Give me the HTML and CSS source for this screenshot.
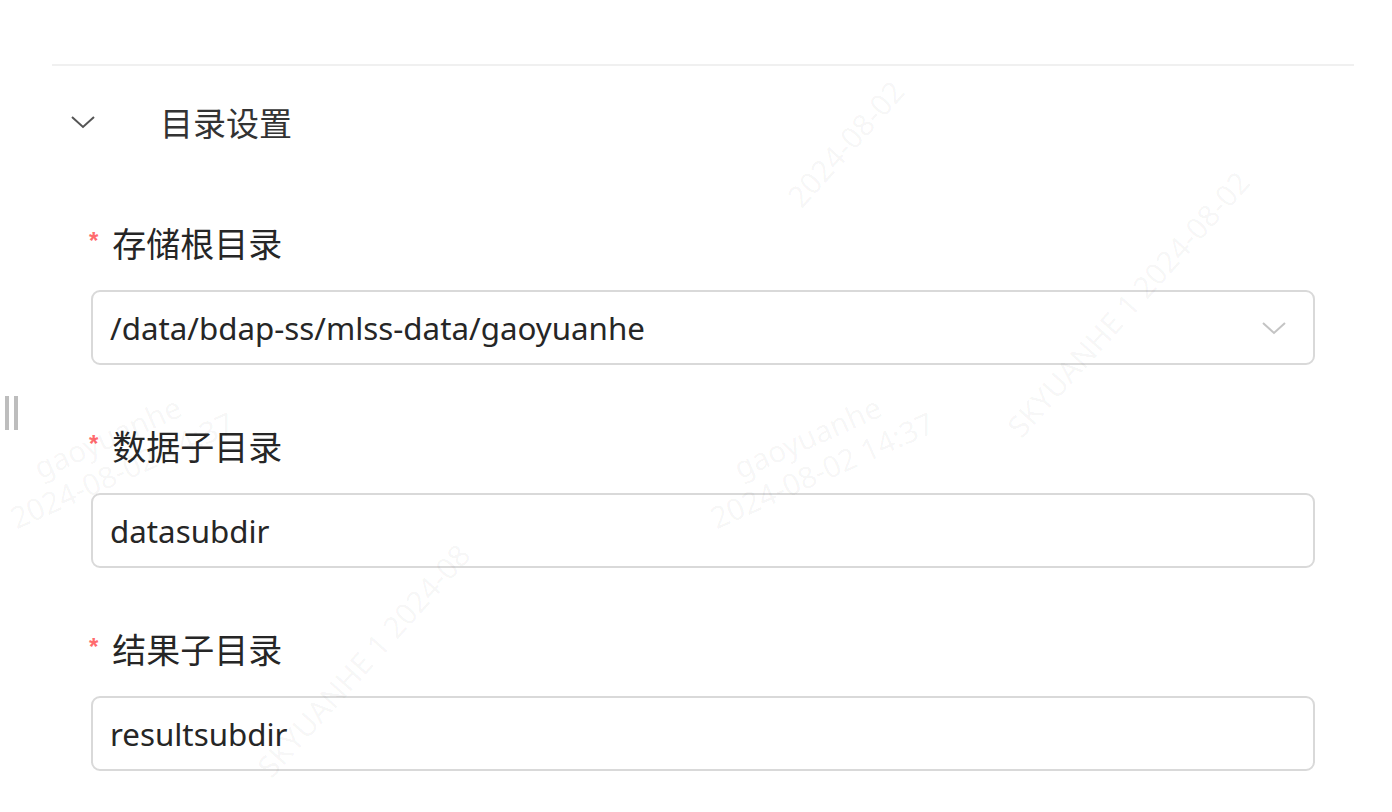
FILE: index.html
```html
<!DOCTYPE html>
<html lang="zh-CN">
<head>
<meta charset="utf-8">
<link rel="stylesheet" href="styles.css">
</head>
<body>
<div class="page">
  <div class="divider"></div>
  <div class="section-head">
    <svg class="collapse-icon" width="26" height="16" viewBox="0 0 26 16"><path d="M2 3 L13 13 L24 3" fill="none" stroke="#555" stroke-width="2"/></svg>
    <span class="section-title">目录设置</span>
  </div>
  <div class="form">
    <div class="form-item">
      <label class="label"><span class="req">*</span>存储根目录</label>
      <div class="field select">
        <span class="value">/data/bdap-ss/mlss-data/gaoyuanhe</span>
        <svg class="arrow" width="26" height="16" viewBox="0 0 26 16"><path d="M2 3 L13 13 L24 3" fill="none" stroke="#c4c4c4" stroke-width="2"/></svg>
      </div>
    </div>
    <div class="form-item">
      <label class="label"><span class="req">*</span>数据子目录</label>
      <div class="field"><span class="value">datasubdir</span></div>
    </div>
    <div class="form-item">
      <label class="label"><span class="req">*</span>结果子目录</label>
      <div class="field"><span class="value">resultsubdir</span></div>
    </div>
  </div>
  <div class="handle"><span></span><span></span></div>
  <div class="wm wm1">gaoyuanhe<br>2024-08-02 14:37</div>
  <div class="wm wm2">gaoyuanhe<br>2024-08-02 14:37</div>
  <div class="wm wm3">SKYUANHE 1 2024-08-02</div>
  <div class="wm wm4">SKYUANHE 1 2024-08</div>
  <div class="wm wm5">2024-08-02</div>
</div>
</body>
</html>
```

FILE: styles.css
```css
html, body {
  margin: 0;
  padding: 0;
  background: #fff;
}
body {
  font-family: "Noto Sans", "Noto Sans CJK SC", sans-serif;
  color: #262626;
}
.page {
  position: relative;
  width: 1392px;
  height: 812px;
  overflow: hidden;
  padding: 64px 38px 0 52px;
  box-sizing: border-box;
}
.divider {
  height: 2px;
  background: #f0f0f0;
}
.section-head {
  display: flex;
  align-items: center;
  height: 112px;
  padding-left: 18px;
  box-sizing: border-box;
}
.collapse-icon {
  margin-right: 64px;
}
.section-title {
  font-family: "Noto Sans CJK SC", sans-serif;
  font-size: 33px;
  color: #333;
}
.form {
  padding: 0 39px;
  display: flex;
  flex-direction: column;
  gap: 58px;
  margin-top: 42px;
}
.form-item {
  display: flex;
  flex-direction: column;
}
.label {
  font-family: "Noto Sans CJK SC", sans-serif;
  font-size: 34px;
  line-height: 46px;
  color: #262626;
  display: flex;
  align-items: flex-start;
  margin-bottom: 24px;
}
.req {
  color: #ff6b6e;
  font-size: 24px;
  line-height: 24px;
  margin: 9px 14px 0 -2px;
  font-family: "Liberation Sans", sans-serif;
  font-weight: bold;
}
.field {
  height: 75px;
  border: 2px solid #d9d9d9;
  border-radius: 9px;
  box-sizing: border-box;
  display: flex;
  align-items: center;
  padding: 0 26px 0 17px;
}
.value {
  flex: 1;
  font-family: "Noto Sans", sans-serif;
  font-size: 31.3px;
  color: #262626;
}
.handle {
  position: absolute;
  left: 5px;
  top: 396px;
  display: flex;
  gap: 5px;
}
.handle span {
  width: 4px;
  height: 34px;
  background: #bdbdbd;
}
.wm {
  position: absolute;
  font-family: "Noto Sans", sans-serif;
  font-size: 30px;
  line-height: 36px;
  color: rgba(0,0,0,0.045);
  transform: rotate(-24deg);
  transform-origin: left top;
  text-align: center;
  white-space: nowrap;
  pointer-events: none;
}
.wm1 { left: -10px; top: 470px; }
.wm2 { left: 690px; top: 470px; }
.wm3 { left: 1000px; top: 420px; transform: rotate(-48deg); }
.wm4 { left: 250px; top: 760px; transform: rotate(-48deg); }
.wm5 { left: 780px; top: 190px; transform: rotate(-48deg); }
```
